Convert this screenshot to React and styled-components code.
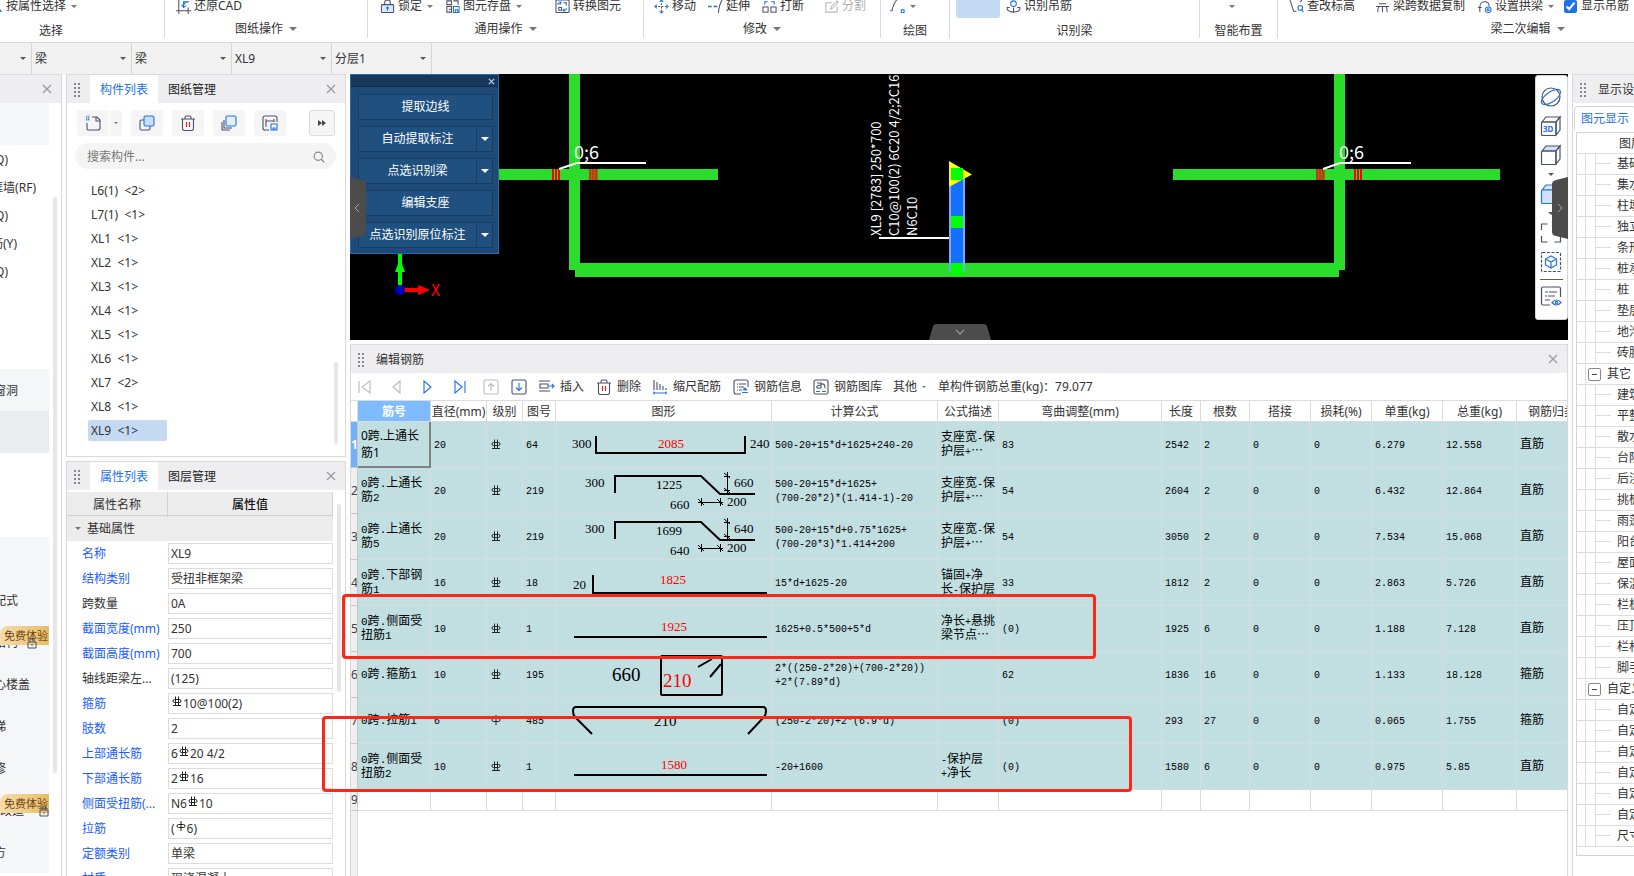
import React from 'react';
import styled, { createGlobalStyle, css } from 'styled-components';

const GlobalStyle = createGlobalStyle`
  * {
    box-sizing: border-box;
  }
  body {
    margin: 0;
    background-color: #fcfcfc;
    color: #333;
    font-family: 'Noto Sans', 'Noto Sans CJK SC', sans-serif;
    font-size: 12px;
    line-height: 16px;
  }
  button, input, select {
    font: inherit;
    color: inherit;
    margin: 0;
    padding: 0;
    border: 0;
    background: none;
  }
`;

/* ---------- shared parts ---------- */

const Page = styled.div`
  height: 100vh;
  display: flex;
  flex-direction: column;
  overflow: hidden;
`;

const Caret = styled.span`
  flex: none;
  width: 0;
  height: 0;
  border-left: ${(props) => props.$size || 3}px solid transparent;
  border-right: ${(props) => props.$size || 3}px solid transparent;
  border-top: ${(props) => props.$size || 3}px solid ${(props) => props.$color || '#777'};
`;

const Panel = styled.section`
  border: 1px solid #d9d9da;
  background-color: #fff;
  display: flex;
  flex-direction: column;
  overflow: hidden;
`;

const PanelHeader = styled.header`
  flex: none;
  height: 28px;
  background-color: #eeeef0;
  display: flex;
  align-items: center;
  padding: 0 8px 0 6px;
`;

const PanelTitle = styled.span`
  padding-top: 2px;
`;

const Tab = styled.button`
  align-self: stretch;
  width: 68px;
  padding-top: 2px;
  background-color: ${(props) => (props.$active ? '#fff' : 'transparent')};
  color: ${(props) => (props.$active ? '#1a73e8' : '#222')};
`;

const CloseButton = styled.button`
  margin-left: auto;
  width: 12px;
  height: 12px;
  display: flex;
`;

const Grip = styled.span`
  flex: none;
  width: 7px;
  height: 15px;
  margin-right: ${(props) => props.$space || 0}px;
  background-image: radial-gradient(circle, #888 1px, transparent 1px);
  background-size: 4px 4px;
`;

const CloseIcon = () => (
  <svg width="12" height="12" viewBox="0 0 12 12" stroke="#999" strokeWidth="1.2">
    <path d="M2 2l8 8M10 2l-8 8" />
  </svg>
);

const Icon = ({ children, size = 16, color = '#4a5068' }) => (
  <svg width={size} height={size} viewBox="0 0 16 16" fill="none" stroke={color} strokeWidth="1.1">
    {children}
  </svg>
);

const BLUE = '#1f72e5';

const TrashIcon = () => (
  <Icon>
    <path d="M1 4h14M5 4V2.500q0-1.500 1.500-1.500h3q1.500 0 1.500 1.500V4M2.500 4v9.500q0 2 2 2h7q2 0 2-2V4" />
    <path d="M6.500 7v5M9.500 7v5" stroke="#e02020" />
  </Icon>
);

const RebarMark = ({ plain }) => (
  <svg width="10" height="11" viewBox="0 0 10 11" fill="none" stroke="#222">
    {plain ? (
      <path d="M2.500 3.500h5q1.500 0 1.500 1.500t-1.500 1.500h-5Q1 6.500 1 5t1.500-1.500zM5 0v10" />
    ) : (
      <path d="M2.500 3.500h5q1.500 0 1.500 1.500t-1.500 1.500h-5Q1 6.500 1 5t1.500-1.500zM3.500 0.500v9M6.500 0.500v9M1 9.500h8" />
    )}
  </svg>
);

/* ---------- ribbon ---------- */

const Ribbon = styled.header`
  flex: none;
  height: 43px;
  display: flex;
  overflow: hidden;
  background-color: #fff;
  border-bottom: 1px solid #d9d9d9;
`;

const RibbonGroup = styled.div`
  flex: none;
  width: ${(props) => props.$width}px;
  margin-left: ${(props) => props.$shift || 0}px;
  height: 38px;
  border-right: 1px solid #dadada;
  display: flex;
  flex-direction: column;
`;

const RibbonTools = styled.div`
  flex: none;
  height: 24px;
  margin-top: -6px;
  padding-left: ${(props) => props.$start}px;
  display: flex;
  align-items: center;
`;

const RibbonButton = styled.button`
  display: flex;
  align-items: center;
  gap: 3px;
  margin-right: ${(props) => props.$after || 0}px;
  white-space: nowrap;
  opacity: ${(props) => (props.disabled ? 0.4 : 1)};

  ${Caret} {
    margin-left: 2px;
  }
`;

const RibbonBlock = styled.button`
  width: 44px;
  height: 23px;
  margin-right: 6px;
  border-radius: 3px;
  background-color: #c3daf2;
`;

const RibbonCheck = styled.label`
  display: flex;
  align-items: center;
  gap: 4px;
  white-space: nowrap;

  input {
    width: 13px;
    height: 13px;
    accent-color: #1f72e5;
  }
`;

const RibbonLabel = styled.div`
  flex: 1;
  padding-top: ${(props) => (props.$plain ? 5 : 2)}px;
  display: flex;
  align-items: center;
  justify-content: center;
  gap: 6px;
`;

const ribbonIcons = {
  pick: <path d="M3 13l4-9 7 9z" stroke={BLUE} />,
  restore: (
    <>
      <path d="M3 0v16M13 9v7M0 12.500h16" />
      <path d="M8 8V3h6M8 8q0-5 6-5M6 6l2 3 3-2" stroke={BLUE} />
    </>
  ),
  lock: (
    <>
      <path d="M5 6V4q0-3 3-3t3 3v2" />
      <rect x="1.500" y="6" width="13" height="8.500" rx="1" fill="#dbe9fd" />
      <path d="M8 8.500v4M6.500 10l1.500-1.500 1.500 1.500" stroke={BLUE} />
    </>
  ),
  save: (
    <>
      <path d="M2 2h5v4H2zM9 2h5v4M2 8h5v6H2zM4 11h3" />
      <path d="M9 8h6v6.500H9zM11 14v-2.500h2.500V14" stroke={BLUE} />
    </>
  ),
  convert: (
    <>
      <rect x="1" y="1" width="14" height="13.500" rx="1" />
      <path d="M9 4h3v3M4 9h3v3H4z" />
      <path d="M3 6q0-2 3-2M12 9.500q0 3-3 2.500M5 2.500L6.500 4 5 6M10 10.500L8.500 12l1.500 1.500" stroke={BLUE} />
    </>
  ),
  move: (
    <>
      <path d="M8 1v14M1 8h14" strokeDasharray="2 1.500" />
      <path d="M6 3l2-2 2 2M6 13l2 2 2-2M3 6L1 8l2 2M13 6l2 2-2 2" stroke={BLUE} />
    </>
  ),
  extend: (
    <>
      <path d="M0 8h4M6 8h4" stroke={BLUE} strokeWidth="1.500" />
      <path d="M15 1q-3 5-4 14" />
    </>
  ),
  split: (
    <>
      <rect x="1" y="8.500" width="5.500" height="5.500" />
      <rect x="9.500" y="8.500" width="5.500" height="5.500" />
      <path d="M3 6V3h3M13 6V3h-3" stroke={BLUE} />
    </>
  ),
  divide: <path d="M14 8v6H2V4h7M7 11l1-3 6-6 1 2-6 6z" />,
  arc: (
    <>
      <path d="M2 12Q4 4 8 0" />
      <path d="M0 12.500h3M12 11.500h3v3h-3z" stroke={BLUE} />
    </>
  ),
  hanger: (
    <>
      <path d="M1 9q0 5 7 5t7-5M1 9h3M12 9h3M8 9v5" />
      <circle cx="8" cy="5" r="3" stroke={BLUE} />
    </>
  ),
  level: (
    <>
      <path d="M1 1l4 12h3M12 3l2-2" />
      <circle cx="12" cy="9.500" r="2.500" stroke={BLUE} />
      <path d="M13.500 11.500l2 2.500" stroke={BLUE} />
    </>
  ),
  span: <path d="M1 8h14M4 5h8M3 14q0-6 2-6M13 14q0-6-2-6M8 8v6" />,
  arch: (
    <>
      <path d="M3 14V9Q3 3 8 3t5 5M1 9h4" />
      <circle cx="12" cy="11.500" r="3" stroke={BLUE} />
      <circle cx="12" cy="11.500" r="1" stroke={BLUE} />
    </>
  ),
};

const Tool = ({ icon, children, menu, after, disabled }) => (
  <RibbonButton $after={after} disabled={disabled} aria-label={children ? undefined : '弧线'}>
    {icon && <Icon size={15}>{ribbonIcons[icon]}</Icon>}
    {children}
    {menu && <Caret />}
  </RibbonButton>
);

const TopRibbon = () => (
  <Ribbon>
    <RibbonGroup $width={227} $shift={-62}>
      <RibbonTools $start={50}>
        <Tool icon="pick" menu>按属性选择</Tool>
      </RibbonTools>
      <RibbonLabel $plain>选择</RibbonLabel>
    </RibbonGroup>
    <RibbonGroup $width={203}>
      <RibbonTools $start={11}>
        <Tool icon="restore">还原CAD</Tool>
      </RibbonTools>
      <RibbonLabel>图纸操作<Caret $size={4} /></RibbonLabel>
    </RibbonGroup>
    <RibbonGroup $width={276}>
      <RibbonTools $start={12}>
        <Tool icon="lock" menu after={12}>锁定</Tool>
        <Tool icon="save" menu after={33}>图元存盘</Tool>
        <Tool icon="convert">转换图元</Tool>
      </RibbonTools>
      <RibbonLabel>通用操作<Caret $size={4} /></RibbonLabel>
    </RibbonGroup>
    <RibbonGroup $width={237}>
      <RibbonTools $start={10}>
        <Tool icon="move" after={12}>移动</Tool>
        <Tool icon="extend" after={12}>延伸</Tool>
        <Tool icon="split" after={20}>打断</Tool>
        <Tool icon="divide" disabled>分割</Tool>
      </RibbonTools>
      <RibbonLabel>修改<Caret $size={4} /></RibbonLabel>
    </RibbonGroup>
    <RibbonGroup $width={69}>
      <RibbonTools $start={9}>
        <Tool icon="arc" menu />
      </RibbonTools>
      <RibbonLabel $plain>绘图</RibbonLabel>
    </RibbonGroup>
    <RibbonGroup $width={250}>
      <RibbonTools $start={6}>
        <RibbonBlock aria-label="识别梁" />
        <Tool icon="hanger">识别吊筋</Tool>
      </RibbonTools>
      <RibbonLabel $plain>识别梁</RibbonLabel>
    </RibbonGroup>
    <RibbonGroup $width={78}>
      <RibbonTools $start={29}>
        <Caret />
      </RibbonTools>
      <RibbonLabel $plain>智能布置</RibbonLabel>
    </RibbonGroup>
    <RibbonGroup $width={500}>
      <RibbonTools $start={11}>
        <Tool icon="level" after={20}>查改标高</Tool>
        <Tool icon="span" after={12}>梁跨数据复制</Tool>
        <Tool icon="arch" menu after={10}>设置拱梁</Tool>
        <RibbonCheck>
          <input type="checkbox" defaultChecked />
          显示吊筋
        </RibbonCheck>
      </RibbonTools>
      <RibbonLabel>梁二次编辑<Caret $size={4} /></RibbonLabel>
    </RibbonGroup>
  </Ribbon>
);

/* ---------- context selectors ---------- */

const ContextBar = styled.nav`
  flex: none;
  height: 31px;
  display: flex;
  background-color: #f1f1f1;
`;

const ContextCell = styled.label`
  width: ${(props) => props.$width || 100}px;
  display: flex;
  align-items: center;
  padding: 0 5px 0 3px;
  border-right: 1px solid #d4d4d4;

  select {
    flex: 1;
    min-width: 0;
    appearance: none;
    outline: none;
  }
`;

const ContextSelect = ({ value, label, width }) => (
  <ContextCell $width={width}>
    <select aria-label={label} defaultValue={value}>
      <option>{value}</option>
    </select>
    <Caret $color="#555" />
  </ContextCell>
);

/* ---------- module tree at the far left ---------- */

const Body = styled.main`
  flex: 1;
  min-height: 0;
  display: flex;
  gap: 4px;
`;

const ModulePanel = styled(Panel)`
  flex: none;
  width: 62px;
  border-left: 0;
  border-bottom: 0;
`;

const ModuleScroll = styled.div`
  flex: 1;
  display: flex;
  align-items: flex-start;
  justify-content: space-between;
  padding-right: 4px;
`;

const ModuleList = styled.ul`
  width: 49px;
  margin: 0;
  padding: 0;
  list-style: none;
`;

const ModuleItem = styled.li`
  position: relative;
  height: ${(props) => props.$height || 42}px;
  background-color: ${(props) => props.$tone || 'transparent'};
  display: flex;
  align-items: center;

  /* the row text runs out of the left edge of the window */
  > span {
    width: ${(props) => props.$reach || 0}px;
    padding-top: 2px;
    display: flex;
    justify-content: flex-end;
    overflow: hidden;
    white-space: nowrap;
  }
`;

const TrialBadge = styled.em`
  position: absolute;
  left: 0;
  right: 0;
  top: 5px;
  height: 19px;
  padding-left: 4px;
  border-radius: 8px 0 0 0;
  background-image: linear-gradient(90deg, #f6dcaa, #e9bd66);
  color: #6b4312;
  font-size: 11px;
  line-height: 19px;
  font-style: normal;
  white-space: nowrap;
`;

const LockMark = styled.svg`
  position: absolute;
  left: ${(props) => props.$left}px;
  bottom: 14px;
`;

const ModuleThumb = styled.div`
  width: 4px;
  height: 576px;
  margin-top: 94px;
  border-radius: 2px;
  background-color: #e6e6e8;
`;

const PALE = '#f5f6f8';

const modules = [
  { tone: PALE },
  { text: '(Q)', reach: 8, height: 28 },
  { text: '框墙(RF)', reach: 36, height: 28 },
  { text: '(Q)', reach: 8, height: 28 },
  { text: '筋(Y)', reach: 17, height: 28 },
  { text: '(Q)', reach: 8, height: 28 },
  {},
  {},
  { text: '窗洞', reach: 18, tone: PALE },
  { tone: '#ebecf0' },
  {},
  {},
  { tone: PALE },
  { text: '配式', reach: 18, tone: PALE },
  { text: '结构', reach: 18, tone: PALE, lock: 27 },
  { text: '心楼盖', reach: 30, tone: PALE },
  { text: '楼梯', reach: 6, tone: PALE },
  { text: '装修', reach: 6, tone: PALE },
  { text: '改造', reach: 24, tone: PALE, lock: 39 },
  { text: '土方', reach: 6, tone: PALE },
];

const Modules = () => (
  <ModulePanel>
    <PanelHeader>
      <CloseButton aria-label="关闭"><CloseIcon /></CloseButton>
    </PanelHeader>
    <ModuleScroll>
      <ModuleList>
        {modules.map((item, i) => (
          <ModuleItem key={i} $tone={item.tone} $height={item.height} $reach={item.reach}>
            <span>{item.text}</span>
            {item.lock && <TrialBadge>免费体验</TrialBadge>}
            {item.lock && (
              <LockMark $left={item.lock} width="10" height="11" viewBox="0 0 10 11" fill="none" stroke="#4a5068">
                <path d="M1 4h8v6H1zM3 4V1h4v3M5 6v2" />
              </LockMark>
            )}
          </ModuleItem>
        ))}
      </ModuleList>
      <ModuleThumb />
    </ModuleScroll>
  </ModulePanel>
);

/* ---------- component list ---------- */

const SideColumn = styled.div`
  flex: none;
  width: 280px;
  display: flex;
  flex-direction: column;
  gap: 4px;
`;

const ListPanel = styled(Panel)`
  flex: none;
  height: 383px;
`;

const ToolRow = styled.div`
  display: flex;
  gap: 9px;
  padding: 7px 10px;
`;

const SquareButton = styled.button`
  width: ${(props) => props.$width || 32}px;
  height: 26px;
  border-radius: 3px;
  background-color: #f5f5f6;
  display: flex;
  align-items: center;
  justify-content: center;
`;

const SplitPair = styled.div`
  display: flex;
  gap: 1px;
`;

const MoreButton = styled(SquareButton)`
  width: 26px;
  margin-left: auto;
  border: 1px solid #dcdcdc;
`;

const SearchBox = styled.label`
  display: flex;
  align-items: center;
  height: 26px;
  margin: 0 9px 0 8px;
  padding: 1px 11px 0 12px;
  border-radius: 13px;
  background-color: #f4f4f4;

  input {
    flex: 1;
    min-width: 0;
    outline: none;
  }
  input::placeholder {
    color: #777;
  }
`;

const ListArea = styled.div`
  flex: 1;
  display: flex;
  justify-content: space-between;
  padding: 11px 7px 0 21px;
`;

const Entries = styled.ul`
  margin: 0;
  padding: 0;
  list-style: none;
`;

const Entry = styled.li`
  width: 79px;
  height: 21px;
  margin-bottom: 3px;
  padding-left: 3px;
  line-height: 21px;
  border-radius: 2px;
  white-space: pre;
  background-color: ${(props) => (props.$selected ? '#c3daf2' : 'transparent')};
`;

const Thumb = styled.div`
  width: 4px;
  height: ${(props) => props.$height}px;
  margin-top: ${(props) => props.$top}px;
  border-radius: 2px;
  background-color: #e6e6e8;
`;

const entries = [
  'L6(1)  <2>', 'L7(1)  <1>', 'XL1  <1>', 'XL2  <1>', 'XL3  <1>', 'XL4  <1>',
  'XL5  <1>', 'XL6  <1>', 'XL7  <2>', 'XL8  <1>', 'XL9  <1>',
];

const ComponentList = () => (
  <ListPanel>
    <PanelHeader>
      <Grip $space={10} />
      <Tab $active>构件列表</Tab>
      <Tab>图纸管理</Tab>
      <CloseButton aria-label="关闭"><CloseIcon /></CloseButton>
    </PanelHeader>
    <ToolRow>
      <SplitPair>
        <SquareButton aria-label="新建">
          <Icon>
            <path d="M7 2h5l3 3v8q0 2-2 2H3q-1 0-1-2V8M11 2v4h4" />
            <path d="M1 2.500h4M1 4.500h4M2 0.500v5M4 0.500v5" stroke={BLUE} strokeDasharray="1 1" />
          </Icon>
        </SquareButton>
        <SquareButton $width={12} aria-label="新建选项"><Caret $size={2} /></SquareButton>
      </SplitPair>
      <SquareButton aria-label="复制">
        <Icon>
          <rect x="1" y="5" width="10" height="10" rx="1.500" />
          <rect x="5" y="1" width="10" height="10" rx="1.500" fill="#c9defa" stroke={BLUE} />
        </Icon>
      </SquareButton>
      <SquareButton aria-label="删除"><TrashIcon /></SquareButton>
      <SquareButton aria-label="层间复制">
        <Icon>
          <path d="M3 5v8h8M1 7v8h8" />
          <rect x="5" y="1" width="10" height="10" rx="1.500" fill="#e3eefd" stroke={BLUE} />
        </Icon>
      </SquareButton>
      <SquareButton aria-label="存盘">
        <Icon>
          <path d="M7 15H3q-2 0-2-2V3q0-2 2-2h10q2 0 2 2v4M4 4v8M4 6h8M12 4v3" />
          <path d="M9 9h6v6H9zM11 15v-2h2v2" stroke={BLUE} />
        </Icon>
      </SquareButton>
      <MoreButton aria-label="更多">
        <svg width="8" height="6" viewBox="0 0 8 6" fill="#444"><path d="M0 0l4 3-4 3zM4 0l4 3-4 3z" /></svg>
      </MoreButton>
    </ToolRow>
    <SearchBox>
      <input type="text" placeholder="搜索构件..." aria-label="搜索构件" />
      <Icon size={12} color="#888">
        <circle cx="7" cy="7" r="5.500" strokeWidth="1.500" />
        <path d="M11 11l4 4" strokeWidth="1.500" />
      </Icon>
    </SearchBox>
    <ListArea>
      <Entries>
        {entries.map((entry) => (
          <Entry key={entry} $selected={entry.startsWith('XL9')}>{entry}</Entry>
        ))}
      </Entries>
      <Thumb $height={82} $top={182} />
    </ListArea>
  </ListPanel>
);

/* ---------- property list ---------- */

const PropertyPanel = styled(Panel)`
  flex: 1;
  min-height: 0;
  border-bottom: 0;
`;

const PropertyArea = styled.div`
  flex: 1;
  min-height: 0;
  display: flex;
  gap: 4px;
  padding-top: 2px;
`;

const Properties = styled.div`
  flex: none;
  width: 266px;
`;

const PropertyHead = styled.div`
  display: grid;
  grid-template-columns: 101px minmax(0, 1fr);
  height: 24px;
  line-height: 25px;
  text-align: center;
  background-color: #ececed;
  border-bottom: 1px solid #d2d2d2;

  span, strong {
    border-right: 1px solid #d2d2d2;
  }
  strong {
    font-weight: 500;
    color: #111;
  }
`;

const PropertySection = styled.div`
  display: flex;
  align-items: center;
  gap: 6px;
  height: 25px;
  padding-left: 8px;
  background-color: #ececed;
`;

const PropertyRow = styled.div`
  display: grid;
  grid-template-columns: 86px minmax(0, 1fr);
  align-items: center;
  height: 25px;
  padding-left: 15px;

  label {
    color: ${(props) => (props.$fixed ? '#333' : '#1a5cff')};
    white-space: nowrap;
  }
`;

const ValueBox = styled.div`
  display: flex;
  align-items: center;
  height: 21px;
  padding-left: 2px;
  border: 1px solid #dcdcdc;

  svg {
    flex: none;
    margin: 0 1px 4px;
  }
  input {
    flex: 1;
    min-width: 0;
    outline: none;
  }
`;

// mark sits between the leading count and the rest of the value
const properties = [
  { name: '名称', value: 'XL9' },
  { name: '结构类别', value: '受扭非框架梁' },
  { name: '跨数量', value: '0A', fixed: true },
  { name: '截面宽度(mm)', value: '250' },
  { name: '截面高度(mm)', value: '700' },
  { name: '轴线距梁左...', value: '(125)', fixed: true },
  { name: '箍筋', lead: '', mark: 'hrb', value: '10@100(2)' },
  { name: '肢数', value: '2' },
  { name: '上部通长筋', lead: '6', mark: 'hrb', value: '20 4/2' },
  { name: '下部通长筋', lead: '2', mark: 'hrb', value: '16' },
  { name: '侧面受扭筋(...', lead: 'N6', mark: 'hrb', value: '10' },
  { name: '拉筋', lead: '(', mark: 'plain', value: '6)' },
  { name: '定额类别', value: '单梁' },
  { name: '材质', value: '现浇混凝土' },
];

const PropertyList = () => (
  <PropertyPanel>
    <PanelHeader>
      <Grip $space={10} />
      <Tab $active>属性列表</Tab>
      <Tab>图层管理</Tab>
      <CloseButton aria-label="关闭"><CloseIcon /></CloseButton>
    </PanelHeader>
    <PropertyArea>
      <Properties>
        <PropertyHead>
          <span>属性名称</span>
          <strong>属性值</strong>
        </PropertyHead>
        <PropertySection><Caret />基础属性</PropertySection>
        {properties.map((p, i) => (
          <PropertyRow key={p.name} $fixed={p.fixed}>
            <label htmlFor={`prop-${i}`}>{p.name}</label>
            <ValueBox>
              {p.lead}
              {p.mark && <RebarMark plain={p.mark === 'plain'} />}
              <input id={`prop-${i}`} defaultValue={p.value} />
            </ValueBox>
          </PropertyRow>
        ))}
      </Properties>
      <Thumb $height={188} $top={12} />
    </PropertyArea>
  </PropertyPanel>
);

/* ---------- drawing viewport ---------- */

const Workspace = styled.div`
  position: relative;
  flex: 1;
  min-width: 0;
  display: flex;
  flex-direction: column;
  gap: 4px;
`;

const Viewport = styled.div`
  position: relative;
  flex: none;
  height: 266px;
  overflow: hidden;
  background-color: #000;
`;

const Drawing = styled.svg`
  display: block;
  width: 100%;
  height: 266px;
  font-family: 'Noto Sans CJK SC', sans-serif;
`;

const hatch = (x, dim) => (
  <g fill={dim ? '#c33a10' : '#ff0000'}>
    {dim && <rect x={x} y="95" width="9" height="11" fill="#8d7416" />}
    <rect x={x} y="95" width="2" height="11" />
    <rect x={x + 3} y="95" width="2" height="11" />
    <rect x={x + 6} y="95" width="2" height="11" />
  </g>
);

const BeamPlan = () => (
  <Drawing>
    <g fill="#2bdd2b">
      <rect x="219" y="0" width="11" height="196" />
      <rect x="984" y="0" width="11" height="196" />
      <rect x="225" y="189" width="764" height="14" />
      <rect x="148" y="95" width="220" height="11" />
      <rect x="823" y="95" width="327" height="11" />
    </g>
    {hatch(202)}
    {hatch(239, true)}
    {hatch(966, true)}
    {hatch(1004)}
    <g fill="none" stroke="#fff" strokeWidth="2">
      <path d="M209 95L227 89H296" />
      <path d="M973 95L990 89H1061" />
      <path d="M529 164H599" />
    </g>
    <g fill="#fff" fontSize="18">
      <text x="224" y="85">0;6</text>
      <text x="989" y="85">0;6</text>
    </g>
    <g fill="#fff" fontSize="13">
      <text transform="translate(531 162) rotate(-90)">XL9 [2783] 250*700</text>
      <text transform="translate(549 162) rotate(-90)">C10@100(2) 6C20 4/2;2C16</text>
      <text transform="translate(567 162) rotate(-90)">N6C10</text>
    </g>
    <rect x="600" y="100" width="14" height="96" fill="#1670ff" stroke="#74aaff" strokeWidth="2" />
    <path d="M599 87L622 100.500L599 113z" fill="#ffff00" />
    <g fill="#00ff00">
      <rect x="601" y="94" width="12" height="12" />
      <rect x="601" y="142" width="12" height="12" />
      <rect x="601" y="189" width="12" height="12" />
    </g>
    <g>
      <path d="M50 179V212" stroke="#00ff00" strokeWidth="4" />
      <path d="M50 185l5 13h-10z" fill="#00ff00" />
      <path d="M53 216H69" stroke="#f00" strokeWidth="4" />
      <path d="M68 211l12 5-12 5z" fill="#f00" />
      <circle cx="50" cy="216" r="5" fill="#0000c0" />
      <text x="81" y="222" fill="#f00" fontSize="16">X</text>
    </g>
    <path d="M579 266L583 252q1-2 3-2H634q2 0 3 2L641 266z" fill="#4c4c4c" />
    <path d="M606 256l4 4 4-4" fill="none" stroke="#999" strokeWidth="1.200" />
  </Drawing>
);

const CommandBox = styled.div`
  position: absolute;
  left: 0;
  top: 0;
  width: 149px;
  border: 1px solid #2a6aa5;
  background-color: #1d4a77;
  color: #fff;
`;

const CommandTitle = styled.div`
  height: 12px;
  background-color: #17375b;
  border-bottom: 1px solid #102a48;
  display: flex;
  justify-content: flex-end;
  padding: 3px;

  button {
    display: flex;
  }
`;

const Commands = styled.div`
  display: flex;
  flex-direction: column;
  gap: 6px;
  padding: 7px 5px 5px 7px;
`;

const Command = styled.div`
  display: flex;
  height: 26px;
  border: 1px solid #173d62;
  background-color: #20507f;

  button:first-child {
    flex: 1;
  }
`;

const CommandMenu = styled.button`
  width: 16px;
  border-left: 1px solid #173d62;
  display: flex;
  align-items: center;
  justify-content: center;
`;

const commands = [
  ['提取边线', false],
  ['自动提取标注', true],
  ['点选识别梁', true],
  ['编辑支座', false],
  ['点选识别原位标注', true],
];

const SideHandle = styled.svg`
  position: absolute;
  top: 103px;
  ${(props) => (props.$right ? css`right: 0;` : css`left: 0;`)}
`;

const ViewTools = styled.div`
  position: absolute;
  top: 1px;
  right: 0;
  width: 33px;
  height: 245px;
  padding: 10px 1px 0 0;
  border: 1px solid #d6d6da;
  border-radius: 3px;
  background-color: #fff;
  display: flex;
  flex-direction: column;
  align-items: center;
  gap: 7px;

  button {
    display: flex;
    height: 22px;
    align-items: center;
  }
  hr {
    width: 23px;
    margin: -1px 0 -2px;
    border: 0;
    border-top: 1px solid #555b70;
  }
`;

const ViewIcon = ({ children }) => (
  <svg width="22" height="22" viewBox="0 0 22 22" fill="none" stroke="#4a5068" strokeWidth="1.2">
    {children}
  </svg>
);

const Cube = ({ top, fill, color }) => (
  <g stroke={color}>
    <path d="M2 7l4-5h14l-4 5z" fill={top} />
    <path d="M16 7l4-5v13l-4 5z" />
    <rect x="1.500" y="7" width="14.500" height="13.500" rx="1" fill={fill} />
  </g>
);

const ViewStrip = () => (
  <ViewTools>
    <button aria-label="动态观察">
      <ViewIcon>
        <circle cx="11" cy="11" r="9" />
        <ellipse cx="11" cy="11" rx="11" ry="5" transform="rotate(-35 11 11)" stroke={BLUE} />
      </ViewIcon>
    </button>
    <button aria-label="三维">
      <ViewIcon>
        <Cube />
        <text x="3" y="17" fontSize="8" fontWeight="700" fill={BLUE} stroke="none">3D</text>
      </ViewIcon>
    </button>
    <button aria-label="俯视"><ViewIcon><Cube top="#cfe1fb" /></ViewIcon></button>
    <Caret $color="#555b70" />
    <button aria-label="着色"><ViewIcon><Cube top="#dce9fc" fill="#cfe1fb" color={BLUE} /></ViewIcon></button>
    <Caret $color="#555b70" />
    <button aria-label="全屏">
      <ViewIcon><path d="M1.500 8V2h6M14.500 2h6v6M20.500 14v6h-6M7.500 20h-6v-6" /></ViewIcon>
    </button>
    <button aria-label="局部三维">
      <ViewIcon>
        <rect x="1.500" y="1.500" width="19" height="19" rx="1" strokeDasharray="3 1.500" />
        <path d="M11 5l5.500 3v6L11 17l-5.500-3V8zM5.500 8l5.500 3 5.500-3M11 11v6" stroke={BLUE} />
      </ViewIcon>
    </button>
    <hr />
    <button aria-label="显示设置">
      <ViewIcon>
        <path d="M10 20H3q-1.500 0-1.500-1.500v-15Q1.500 2 3 2h16q1.500 0 1.500 1.500V12M5 7h3M9 7h8M5 11h2M8 11h7M5 15h5" />
        <path d="M12 17.500q4.500-5 9 0q-4.500 5-9 0z" stroke={BLUE} />
        <circle cx="16.500" cy="17.500" r="1.200" stroke={BLUE} />
      </ViewIcon>
    </button>
  </ViewTools>
);

const Canvas = () => (
  <Viewport>
    <BeamPlan />
    <CommandBox>
      <CommandTitle>
        <button aria-label="关闭">
          <svg width="7" height="7" viewBox="0 0 8 8" stroke="#a8d0f5" strokeWidth="1.500"><path d="M1 1l6 6M7 1l-6 6" /></svg>
        </button>
      </CommandTitle>
      <Commands>
        {commands.map(([label, menu]) => (
          <Command key={label}>
            <button>{label}</button>
            {menu && <CommandMenu aria-label={`${label}选项`}><Caret $size={4} $color="#fff" /></CommandMenu>}
          </Command>
        ))}
      </Commands>
    </CommandBox>
    <SideHandle width="16" height="62" viewBox="0 0 16 62">
      <path d="M0 0L12 3q4 1 4 4v48q0 3-4 4L0 62z" fill="#4c4c4c" />
      <path d="M9 27l-4 4 4 4" fill="none" stroke="#aaa" />
    </SideHandle>
    <ViewStrip />
    <SideHandle $right width="16" height="62" viewBox="0 0 16 62">
      <path d="M16 0L4 3q-4 1-4 4v48q0 3 4 4l12 3z" fill="#4c4c4c" />
      <path d="M6 27l4 4-4 4" fill="none" stroke="#aaa" />
    </SideHandle>
  </Viewport>
);

/* ---------- rebar editor ---------- */

const EditorPanel = styled(Panel)`
  flex: 1;
  min-height: 0;
  border-bottom: 0;
`;

const EditorTools = styled.div`
  flex: none;
  display: flex;
  align-items: center;
  height: 28px;
  padding: 0 6px;
  border-bottom: 1px solid #dcdcdc;
  white-space: nowrap;
`;

const EditorButton = styled.button`
  display: flex;
  align-items: center;
  justify-content: center;
  gap: 5px;
  min-width: ${(props) => (props.$step ? 16 : 0)}px;
  margin-right: ${(props) => props.$after || 12}px;
`;

const GridArea = styled.div`
  flex: 1;
  overflow: hidden;
  background-image: linear-gradient(90deg, #f0f0f0 6px, #dcdcdc 6px, #dcdcdc 7px, #fff 7px);
`;

const RebarTable = styled.table`
  table-layout: fixed;
  width: 1237px;
  border-collapse: separate;
  border-spacing: 0;

  th, td {
    padding: 0;
    border-right: 1px solid #d9dcdc;
    border-bottom: 1px solid #d9dcdc;
    font-weight: 400;
    text-align: left;
    white-space: pre;
    overflow: hidden;
  }
  thead th {
    height: 21px;
    padding-top: 2px;
    text-align: center;
    background-color: #fff;
  }
`;

const ActiveHead = styled.th`
  && {
    background-color: #7fbbff;
    color: #fff;
    font-weight: 700;
  }
`;

const RowHead = styled.th`
  && {
    height: ${(props) => (props.$empty ? 21 : 46)}px;
    border-color: #c8c8c8;
    color: ${(props) => (props.$active ? '#fff' : '#444')};
    background-color: ${(props) => (props.$active ? '#6fb0fa' : '#efefef')};
    font-weight: ${(props) => (props.$active ? 700 : 400)};
  }
`;

const Cell = styled.td`
  && {
    height: ${(props) => (props.$empty ? 21 : 46)}px;
    padding-left: ${(props) => (props.$flush ? 0 : 3)}px;
    padding-bottom: ${(props) => (props.$flush ? 0 : 2)}px;
    background-color: ${(props) => (props.$empty ? '#fff' : '#c1dee1')};
    color: #000;
    line-height: ${(props) => (props.$editing ? 17 : 14)}px;
    box-shadow: ${(props) => (props.$editing ? 'inset -1px -1px 0 #808080' : 'none')};
    ${(props) => props.$editing && css`border-color: #808080;`}
  }
  svg {
    display: block;
  }
`;

const Narrow = styled.span`
  font-family: 'Liberation Mono', monospace;
  font-size: ${(props) => (props.$large ? 11 : 10)}px;
  line-height: 10px;
`;

const MarkBox = styled.div`
  padding: 2px 0 0 1px;
`;

// half-width characters are set in the narrow monospace face
const Mixed = ({ text, large }) =>
  text
    .split(/([\x20-\x7e\n]+)/)
    .filter(Boolean)
    .map((part, i) =>
      /^[\x20-\x7e\n]/.test(part) ? <Narrow key={i} $large={large}>{part}</Narrow> : part
    );

const Shape = styled.svg`
  font-family: 'Liberation Serif', serif;
  font-size: 13px;
  fill: none;
  stroke: #000;
  stroke-width: 2;

  text {
    fill: #000;
    stroke: none;
  }
  .red {
    fill: #f00;
  }
  .thin {
    stroke-width: 1;
  }
  .big {
    font-size: 19px;
  }
`;

const Bent = ({ length, rise }) => (
  <>
    <path d="M59 25V8H145L164 26H199" />
    <path className="thin" d="M171.500 4V25M168 5l6 5M168 20l6 5M168 8.500h6M168 22.500h6M142 34.500H167M145.500 30v8M164.500 30v8M142 31l6 6M161 31l6 6" />
    <text x="29" y="19">300</text>
    <text x="100" y="21">{length}</text>
    <text x="178" y="19">{rise}</text>
    <text x="114" y="41">{rise}</text>
    <text x="171" y="38">200</text>
  </>
);

const Straight = ({ length }) => (
  <>
    <path d="M18 31H211" />
    <text className="red" x="105" y="25">{length}</text>
  </>
);

const shapes = {
  u: (
    <>
      <path d="M40 14V31H189V14" />
      <text x="16" y="26">300</text>
      <text className="red" x="102" y="26">2085</text>
      <text x="194" y="26">240</text>
    </>
  ),
  bentA: <Bent length="1225" rise="660" />,
  bentB: <Bent length="1699" rise="640" />,
  l: (
    <>
      <path d="M37 15V33H211" />
      <text x="17" y="29">20</text>
      <text className="red" x="104" y="24">1825</text>
    </>
  ),
  sideA: <Straight length="1925" />,
  stirrup: (
    <>
      <rect x="105" y="4" width="61" height="39" rx="1" />
      <path d="M142 15L156 7M154 25L165 12" />
      <text className="big" x="56" y="29">660</text>
      <text className="big red" x="107" y="35">210</text>
    </>
  ),
  tie: (
    <>
      <path d="M36 36L19 19Q17 17 17 13Q17 9 20 9H207Q210 9 210 13Q210 17 208 19L192 36" />
      <text x="98" y="28" fontSize="15">210</text>
    </>
  ),
  sideB: <Straight length="1580" />,
};

const columns = [
  ['筋号', 73], ['直径(mm)', 56], ['级别', 36], ['图号', 33], ['图形', 216], ['计算公式', 166],
  ['公式描述', 61], ['弯曲调整(mm)', 163], ['长度', 39], ['根数', 49], ['搭接', 61],
  ['损耗(%)', 61], ['单重(kg)', 71], ['总重(kg)', 74], ['钢筋归类', 71],
];

const bars = [
  ['0跨.上通长\n筋1', '20', '64', 'u', '500-20+15*d+1625+240-20', '支座宽-保\n护层+⋯', '83', '2542', '2', '6.279', '12.558', '直筋'],
  ['0跨.上通长\n筋2', '20', '219', 'bentA', '500-20+15*d+1625+\n(700-20*2)*(1.414-1)-20', '支座宽-保\n护层+⋯', '54', '2604', '2', '6.432', '12.864', '直筋'],
  ['0跨.上通长\n筋5', '20', '219', 'bentB', '500-20+15*d+0.75*1625+\n(700-20*3)*1.414+200', '支座宽-保\n护层+⋯', '54', '3050', '2', '7.534', '15.068', '直筋'],
  ['0跨.下部钢\n筋1', '16', '18', 'l', '15*d+1625-20', '锚固+净\n长-保护层', '33', '1812', '2', '2.863', '5.726', '直筋'],
  ['0跨.侧面受\n扭筋1', '10', '1', 'sideA', '1625+0.5*500+5*d', '净长+悬挑\n梁节点⋯', '(0)', '1925', '6', '1.188', '7.128', '直筋'],
  ['0跨.箍筋1', '10', '195', 'stirrup', '2*((250-2*20)+(700-2*20))\n+2*(7.89*d)', '', '62', '1836', '16', '1.133', '18.128', '箍筋'],
  ['0跨.拉筋1', '6', '485', 'tie', '(250-2*20)+2*(6.9*d)', '', '(0)', '293', '27', '0.065', '1.755', '箍筋'],
  ['0跨.侧面受\n扭筋2', '10', '1', 'sideB', '-20+1600', '-保护层\n+净长', '(0)', '1580', '6', '0.975', '5.85', '直筋'],
];

const BarRow = ({ bar, index }) => {
  const [name, diameter, code, shape, formula, note, bend, length, count, weight, total, kind] = bar;
  return (
    <tr>
      <RowHead scope="row" $active={index === 0}>{index + 1}</RowHead>
      <Cell $editing={index === 0}>{index === 0 ? name : <Mixed text={name} large />}</Cell>
      <Cell><Mixed text={diameter} /></Cell>
      <Cell><MarkBox><RebarMark plain={shape === 'tie'} /></MarkBox></Cell>
      <Cell><Mixed text={code} /></Cell>
      <Cell $flush><Shape width="215" height="45">{shapes[shape]}</Shape></Cell>
      {[formula, note, bend, length, count, '0', '0', weight, total].map((value, i) => (
        <Cell key={i}><Mixed text={value} /></Cell>
      ))}
      <Cell>{kind}</Cell>
    </tr>
  );
};

const Editor = () => (
  <EditorPanel>
    <PanelHeader>
      <Grip $space={12} />
      <PanelTitle>编辑钢筋</PanelTitle>
      <CloseButton aria-label="关闭"><CloseIcon /></CloseButton>
    </PanelHeader>
    <EditorTools>
      <EditorButton $step $after={15} aria-label="第一条"><Icon color="#bbb"><path d="M2 2v12M13 2v12L5 8z" /></Icon></EditorButton>
      <EditorButton $step $after={16} aria-label="上一条"><Icon color="#bbb"><path d="M12 2v12L5 8z" /></Icon></EditorButton>
      <EditorButton $step $after={16} aria-label="下一条"><Icon color={BLUE}><path d="M4 2v12l7-6z" /></Icon></EditorButton>
      <EditorButton $step $after={15} aria-label="最后一条"><Icon color={BLUE}><path d="M3 2v12l7-6zM13 2v12" /></Icon></EditorButton>
      <EditorButton $step aria-label="上移">
        <Icon color="#bbb"><rect x="1" y="1" width="14" height="14" rx="1.500" /><path d="M8 12V4.500M5 7.500l3-3 3 3" /></Icon>
      </EditorButton>
      <EditorButton $step aria-label="下移">
        <Icon><rect x="1" y="1" width="14" height="14" rx="1.500" /><path d="M8 4v7.500M5 8.500l3 3 3-3" stroke={BLUE} /></Icon>
      </EditorButton>
      <EditorButton>
        <Icon><path d="M0 2h11M0 12h11M1 5h8v4H1z" /><path d="M10 7h5M13 5l2 2-2 2" stroke={BLUE} /></Icon>
        插入
      </EditorButton>
      <EditorButton $after={11}><TrashIcon />删除</EditorButton>
      <EditorButton>
        <Icon><path d="M2 1v10M5 3v8M8 5v6M11 7v4M14 9v2" /><path d="M1 14h14M2 12.500v3M14 12.500v3" stroke={BLUE} /></Icon>
        缩尺配筋
      </EditorButton>
      <EditorButton $after={11}>
        <Icon>
          <path d="M8 15H3q-2 0-2-2V3q0-2 2-2h10q2 0 2 2v5M4 5h1M6 5h7M4 8h1M6 8h5M4 11h1M6 11h3" />
          <path d="M12 9v3M10 11l2-2 2 2M9 13.500h6" stroke={BLUE} />
        </Icon>
        钢筋信息
      </EditorButton>
      <EditorButton $after={11}>
        <Icon>
          <rect x="1" y="1" width="14" height="14" rx="1.500" />
          <path d="M4 4h4v5H4q-1-3 4-3M8 5q4-1 4 4" />
          <path d="M3 12.500h4M9 12.500h4" stroke={BLUE} />
        </Icon>
        钢筋图库
      </EditorButton>
      <EditorButton $after={12}>其他<Caret $size={2} /></EditorButton>
      单构件钢筋总重(kg)：79.077
    </EditorTools>
    <GridArea>
      <RebarTable>
        <colgroup>
          <col width="7" />
          {columns.map(([label, width]) => <col key={label} width={width} />)}
        </colgroup>
        <thead>
          <tr>
            <th />
            {columns.map(([label], i) =>
              i === 0 ? <ActiveHead key={label}>{label}</ActiveHead> : <th key={label}>{label}</th>
            )}
          </tr>
        </thead>
        <tbody>
          {bars.map((bar, i) => <BarRow key={i} bar={bar} index={i} />)}
          <tr>
            <RowHead scope="row" $empty>9</RowHead>
            {columns.map(([label]) => <Cell key={label} $empty />)}
          </tr>
        </tbody>
      </RebarTable>
    </GridArea>
  </EditorPanel>
);

// red outlines drawn over the side bars
const Marker = styled.div`
  position: absolute;
  left: ${(props) => props.$left}px;
  top: ${(props) => props.$top}px;
  width: ${(props) => props.$width}px;
  height: ${(props) => props.$height}px;
  border: 3px solid #fb2718;
  border-radius: 4px;
  pointer-events: none;
`;

/* ---------- display settings ---------- */

const DisplayPanel = styled(Panel)`
  flex: none;
  width: 62px;
  border-right: 0;
  border-bottom: 0;
  white-space: nowrap;
`;

const DisplayTab = styled.button`
  flex: none;
  align-self: flex-start;
  width: 62px;
  height: 24px;
  margin: 3px 0 2px 1px;
  border: 1px solid #d4d4d6;
  border-bottom: 0;
  border-radius: 4px 4px 0 0;
  color: #1f72e5;
`;

const Tree = styled.div`
  width: 160px;
  height: 724px;
  flex: none;
  margin-left: 3px;
  border: 1px solid #d4d4d6;
`;

const TreeHead = styled.div`
  height: 21px;
  padding-left: 42px;
  line-height: 22px;
  border-bottom: 1px solid #dcdcdc;
`;

const TreeRow = styled.div`
  display: flex;
  align-items: center;
  height: 21px;
  line-height: 20px;
  border-bottom: 1px solid #dcdcdc;
  background-image: linear-gradient(90deg, transparent 8px, #dcdcdc 8px, #dcdcdc 9px, transparent 9px);
  padding-left: ${(props) => (props.$branch ? 11 : 18)}px;
  gap: 6px;
`;

const Twig = styled.span`
  align-self: stretch;
  width: 16px;
  border-left: 1px solid #dcdcdc;
  background-image: linear-gradient(#dcdcdc, #dcdcdc);
  background-size: 16px 1px;
  background-position: 0 9px;
  background-repeat: no-repeat;
`;

const Toggle = styled.button`
  width: 13px;
  height: 13px;
  border: 1px solid #888;
  border-radius: 2px;
  background-color: #fff;
  display: flex;
  align-items: center;
  justify-content: center;

  &::before {
    content: '';
    width: 5px;
    height: 1px;
    background-color: #444;
  }
`;

const layers = [
  '基础梁', '集水坑', '柱墩', '独立基础', '条形基础', '桩承台', '桩', '垫层', '地沟', '砖胎膜',
  '-其它',
  '建筑面积', '平整场地', '散水', '台阶', '后浇带', '挑檐', '雨蓬', '阳台', '屋面', '保温层', '栏板', '压顶', '栏杆扶手', '脚手架',
  '-自定义',
  '自定义点', '自定义线', '自定义面', '自定义贴面', '自定义钢筋', '自定义孔洞', '尺寸标注',
];

const DisplaySettings = () => (
  <DisplayPanel>
    <PanelHeader>
      <Grip $space={12} />
      <PanelTitle>显示设置</PanelTitle>
    </PanelHeader>
    <DisplayTab>图元显示</DisplayTab>
    <Tree>
      <TreeHead>图层构件</TreeHead>
      {layers.map((layer) =>
        layer[0] === '-' ? (
          <TreeRow key={layer} $branch>
            <Toggle aria-label="折叠" />
            <span>{layer.slice(1)}</span>
          </TreeRow>
        ) : (
          <TreeRow key={layer}>
            <Twig />
            <span>{layer}</span>
          </TreeRow>
        )
      )}
    </Tree>
  </DisplayPanel>
);

const App = () => (
  <>
    <GlobalStyle />
    <Page>
      <TopRibbon />
      <ContextBar>
        <ContextSelect label="楼层" value="" width={32} />
        <ContextSelect label="类别" value="梁" />
        <ContextSelect label="类型" value="梁" />
        <ContextSelect label="构件" value="XL9" />
        <ContextSelect label="分层" value="分层1" />
      </ContextBar>
      <Body>
        <Modules />
        <SideColumn>
          <ComponentList />
          <PropertyList />
        </SideColumn>
        <Workspace>
          <Canvas />
          <Editor />
          <Marker $left={-8} $top={520} $width={754} $height={65} />
          <Marker $left={-28} $top={642} $width={810} $height={76} />
        </Workspace>
        <DisplaySettings />
      </Body>
    </Page>
  </>
);

export default App;
